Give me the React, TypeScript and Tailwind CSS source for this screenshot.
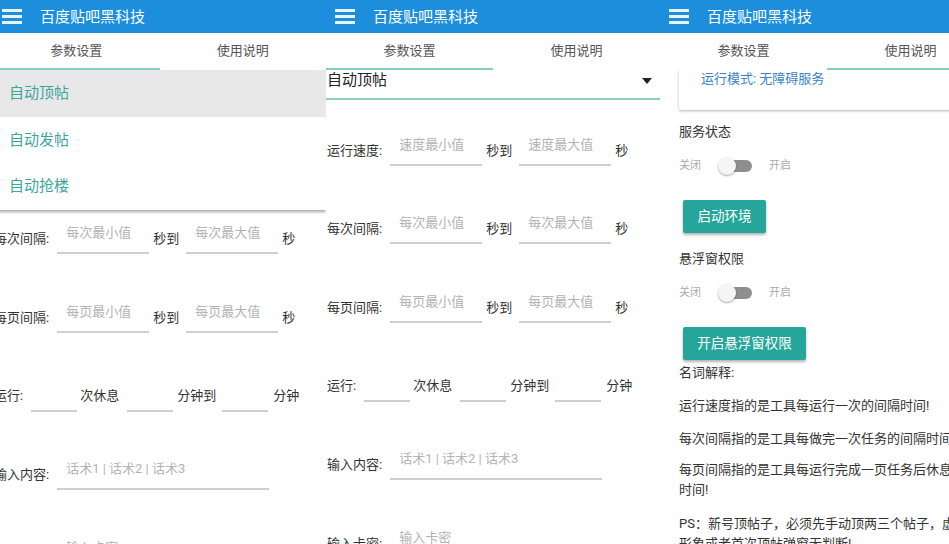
import React from 'react';
import clsx from 'clsx';

const Header = () => (
  <div className="h-[33px] bg-[#1d8edc] flex items-center pl-[9px]">
    <div className="w-[20px] flex flex-col gap-[3.5px]">
      <div className="h-[2.5px] bg-white/90" />
      <div className="h-[2.5px] bg-white/90" />
      <div className="h-[2.5px] bg-white/90" />
    </div>
    <div className="ml-[18px] text-[15px] leading-[20px] text-white">百度贴吧黑科技</div>
  </div>
);

const Tabs = ({ active }: { active: 0 | 1 }) => (
  <div className="h-[37px] flex relative z-10 bg-white">
    {['参数设置', '使用说明'].map((t, i) => (
      <div key={t} className="flex-1 flex flex-col">
        <div className="flex-1 flex items-center justify-center text-[13px] text-[#555]">{t}</div>
        <div className={clsx('h-[2px]', active === i ? 'bg-[#86cdc8]' : 'bg-transparent')} />
      </div>
    ))}
  </div>
);

const Field = ({ w, ph, className }: { w: string; ph?: string; className?: string }) => (
  <div
    className={clsx(
      'h-[31px] border-b-2 border-[#cfcfcf] pl-[9px] text-[13px] leading-[20px] text-[#b3b3b3] whitespace-nowrap',
      w,
      className
    )}
  >
    {ph}
  </div>
);

const Txt = ({ children, className }: { children: React.ReactNode; className?: string }) => (
  <span className={clsx('text-[13px] text-[#333] whitespace-nowrap', className)}>{children}</span>
);

const RangeRow = ({ label, min, max }: { label: string; min: string; max: string }) => (
  <div className="flex items-center h-[78.6px]">
    <Txt>{label}</Txt>
    <Field w="w-[92px]" ph={min} className="ml-[8px]" />
    <Txt className="ml-[4px]">秒到</Txt>
    <Field w="w-[92px]" ph={max} className="ml-[7px]" />
    <Txt className="ml-[4px]">秒</Txt>
  </div>
);

const FormRows = ({ className }: { className: string }) => (
  <div className={clsx('pl-[1px]', className)}>
    <RangeRow label="运行速度:" min="速度最小值" max="速度最大值" />
    <RangeRow label="每次间隔:" min="每次最小值" max="每次最大值" />
    <RangeRow label="每页间隔:" min="每页最小值" max="每页最大值" />
    <div className="flex items-center h-[78.6px]">
      <Txt>运行:</Txt>
      <Field w="w-[46px]" className="ml-[8px]" />
      <Txt className="ml-[3px]">次休息</Txt>
      <Field w="w-[46px]" className="ml-[8px]" />
      <Txt className="ml-[4px]">分钟到</Txt>
      <Field w="w-[46px]" className="ml-[6px]" />
      <Txt className="ml-[5px]">分钟</Txt>
    </div>
    <div className="flex items-center h-[78.6px]">
      <Txt>输入内容:</Txt>
      <Field w="w-[212px]" ph="话术1 | 话术2 | 话术3" className="ml-[8px]" />
    </div>
    <div className="flex items-center h-[78.6px]">
      <Txt>输入卡密:</Txt>
      <Field w="w-[212px]" ph="输入卡密" className="ml-[8px]" />
    </div>
  </div>
);

const Dropdown = () => (
  <div className="h-[30px] flex justify-between border-b-2 border-[#8ccfca] pl-[1px] pr-[8px]">
    <span className="text-[15px] leading-[20px] text-[#222]">自动顶帖</span>
    <svg width="10" height="6" viewBox="0 0 10 6" className="mt-[8px]">
      <path d="M0 0h10L5 6z" fill="#222" />
    </svg>
  </div>
);

const Switch = () => (
  <div className="flex items-center h-[24px]">
    <span className="text-[11px] text-[#aaa]">关闭</span>
    <div className="relative w-[34px] h-[18px] ml-[17px]">
      <div className="absolute left-[7px] top-[3px] w-[27px] h-[12px] rounded-full bg-[#8e8e8e]" />
      <div className="absolute left-0 top-0 w-[18px] h-[18px] rounded-full bg-[#f5f5f5] shadow-[0_1px_2px_rgba(0,0,0,0.35)]" />
    </div>
    <span className="ml-[17px] text-[11px] text-[#aaa]">开启</span>
  </div>
);

const Button = ({ children, w }: { children: React.ReactNode; w: string }) => (
  <div
    className={clsx(
      'ml-[4px] h-[33px] rounded-[2px] bg-[#26a69a] text-white text-[13.5px] flex items-center justify-center shadow-[0_2px_3px_rgba(0,0,0,0.3)]',
      w
    )}
  >
    {children}
  </div>
);

export default function App() {
  return (
    <div className="w-[949px] h-[544px] overflow-hidden flex bg-white font-['Roboto','Noto_Sans_CJK_SC',sans-serif]">
      {/* panel 1 - dropdown open */}
      <div className="-ml-[7px] w-[333px] shrink-0 relative flex flex-col">
        <Header />
        <Tabs active={0} />
        <div className="flex-1 overflow-hidden relative">
          <Dropdown />
          <FormRows className="pt-[21px]" />
          <div className="absolute left-0 right-0 top-0 bg-white shadow-[0_2px_3px_rgba(0,0,0,0.35)]">
            {['自动顶帖', '自动发帖', '自动抢楼'].map((t, i) => (
              <div
                key={t}
                className={clsx(
                  'h-[46.5px] flex items-center pl-[16px] text-[15px] text-[#3aa79b]',
                  i === 0 && 'bg-[#e8e8e8]'
                )}
              >
                {t}
              </div>
            ))}
          </div>
        </div>
      </div>

      {/* panel 2 */}
      <div className="w-[334px] shrink-0 flex flex-col">
        <Header />
        <Tabs active={0} />
        <div className="flex-1 overflow-hidden">
          <Dropdown />
          <FormRows className="pt-[11px]" />
        </div>
      </div>

      {/* panel 3 */}
      <div className="w-[334px] shrink-0 flex flex-col">
        <Header />
        <Tabs active={1} />
        <div className="flex-1 overflow-hidden pl-[19px]">
          <div className="w-[296px] h-[40px] bg-white rounded-[2px] shadow-[0_1px_3px_rgba(0,0,0,0.3)] pl-[22px]">
            <div className="text-[13px] leading-[17px] text-[#3a83c9]">运行模式: 无障碍服务</div>
          </div>
          <div className="mt-[12px] text-[13px] leading-[20px] text-[#333]">服务状态</div>
          <div className="mt-[12px]">
            <Switch />
          </div>
          <div className="mt-[22px]">
            <Button w="w-[83px]">启动环境</Button>
          </div>
          <div className="mt-[16px] text-[13px] leading-[20px] text-[#333]">悬浮窗权限</div>
          <div className="mt-[12px]">
            <Switch />
          </div>
          <div className="mt-[22px]">
            <Button w="w-[123px]">开启悬浮窗权限</Button>
          </div>
          <div className="text-[13px] leading-[20px] text-[#333] whitespace-nowrap">
            <div className="mt-[3px]">名词解释:</div>
            <div className="mt-[13px]">运行速度指的是工具每运行一次的间隔时间!</div>
            <div className="mt-[13px]">每次间隔指的是工具每做完一次任务的间隔时间!</div>
            <div className="mt-[11px]">
              每页间隔指的是工具每运行完成一页任务后休息的
              <br />
              时间!
            </div>
            <div className="mt-[14px]">
              PS：新号顶帖子，必须先手动顶两三个帖子，虚
              <br />
              形象或者首次顶帖弹窗无判断!
            </div>
          </div>
        </div>
      </div>
    </div>
  );
}
